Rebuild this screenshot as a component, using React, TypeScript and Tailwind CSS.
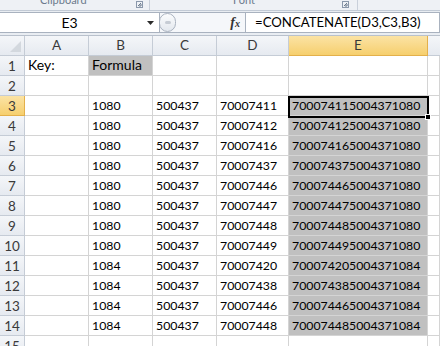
import React from "react";

// Rows 3..14 of the sheet: [B, C, D, E]
const data: [string, string, string, string][] = [
  ["1080", "500437", "70007411", "700074115004371080"],
  ["1080", "500437", "70007412", "700074125004371080"],
  ["1080", "500437", "70007416", "700074165004371080"],
  ["1080", "500437", "70007437", "700074375004371080"],
  ["1080", "500437", "70007446", "700074465004371080"],
  ["1080", "500437", "70007447", "700074475004371080"],
  ["1080", "500437", "70007448", "700074485004371080"],
  ["1080", "500437", "70007449", "700074495004371080"],
  ["1084", "500437", "70007420", "700074205004371084"],
  ["1084", "500437", "70007438", "700074385004371084"],
  ["1084", "500437", "70007446", "700074465004371084"],
  ["1084", "500437", "70007448", "700074485004371084"],
];

const cols = ["A", "B", "C", "D", "E"];

function Launcher() {
  return (
    <svg width="7" height="7" viewBox="0 0 7 7" className="mb-[2px]">
      <rect x="0.5" y="0.5" width="6" height="6" fill="none" stroke="#8a98ab" />
      <path d="M2 5 L5 2 M3 5 H5 V3" stroke="#6b7a8c" fill="none" />
    </svg>
  );
}

function RowHeader({ n, active }: { n: number | string; active?: boolean }) {
  return (
    <div
      className={
        "flex h-[20px] items-end justify-center border-b border-r pb-[2px] text-[13.5px] leading-none " +
        (active
          ? "border-[#e3b04b] bg-gradient-to-b from-[#fbe3a4] to-[#f6cf6d] text-[#3a3a3a]"
          : "border-[#c5ccd6] bg-gradient-to-b from-[#f4f6f9] to-[#e6eaf0] text-[#3a3a3a]")
      }
    >
      {n}
    </div>
  );
}

function Cell({
  children,
  fill,
  word,
}: {
  children?: React.ReactNode;
  fill?: boolean;
  word?: boolean;
}) {
  return (
    <div
      className={
        "flex h-[20px] items-end overflow-hidden whitespace-nowrap border-b border-r border-[#d4d4d4] pb-[3px] pl-[3px] leading-none text-black " +
        (word ? "text-[14px] " : "text-[12.3px] ") +
        (fill ? "bg-[#c0c0c0]" : "bg-white")
      }
    >
      {children}
    </div>
  );
}

export default function App() {
  return (
    <div className="h-[346px] w-[440px] overflow-hidden bg-[#e9edf2] font-['Lato','Liberation_Sans',sans-serif] text-[12px]">
      {/* ribbon group labels, cut off at the top */}
      <div className="flex h-[11px] overflow-hidden border-b border-[#c2cad5] bg-[#eef1f5] text-[11px] leading-none text-[#6b7a8c]">
        <div className="flex w-[150px] items-end justify-between border-r border-[#c9d0da] pr-[6px]">
          <span className="-mt-[6px] ml-[40px] self-start">Clipboard</span>
          <Launcher />
        </div>
        <div className="flex w-[208px] items-end justify-between border-r border-[#c9d0da] pr-[8px]">
          <span className="-mt-[6px] ml-[83px] self-start">Font</span>
          <Launcher />
        </div>
        <div className="flex-1" />
      </div>

      {/* name box + formula bar */}
      <div className="mt-[1px] flex h-[21px] items-stretch">
        <div className="relative flex w-[160px] items-center justify-center border-y border-r border-[#a9b2bf] bg-white text-[14px] text-black">
          <span className="-ml-[20px]">E3</span>
          <svg width="7" height="4" viewBox="0 0 7 4" className="absolute left-[147px] top-[8px]">
            <path d="M0 0 H7 L3.5 4 Z" fill="#2b2b2b" />
          </svg>
        </div>
        <div className="flex w-[85px] items-center border-y border-[#a9b2bf] bg-[#f5f7fa]">
          <div className="-ml-[1px] flex h-[19px] w-[17px] items-center justify-center rounded-full border border-[#a9b2bf] bg-gradient-to-b from-[#fbfcfd] to-[#e3e8ee]">
            <div className="h-[3px] w-[6px] rounded-sm bg-[#c6ccd4]" />
          </div>
          <div className="ml-auto mr-[5px] font-['Liberation_Serif',serif] text-[14px] font-bold italic text-[#333]">
            f<span className="text-[10px]">x</span>
          </div>
        </div>
        <div className="flex flex-1 items-center border border-[#a9b2bf] bg-white pl-[9px] text-[13.2px] text-black">
          =CONCATENATE(D3,C3,B3)
        </div>
      </div>

      {/* sheet grid */}
      <div className="relative mt-[2px] grid grid-cols-[25px_64px_64px_64px_72px_139px_1fr] border-t border-[#b9c1cc] bg-white">
        {/* column headers */}
        <div className="relative h-[20px] border-b border-r border-[#c5ccd6] bg-gradient-to-b from-[#f4f6f9] to-[#e6eaf0]">
          <svg width="11" height="11" viewBox="0 0 11 11" className="absolute bottom-[3px] right-[3px]">
            <path d="M11 0 V11 H0 Z" fill="#d3d8de" />
          </svg>
        </div>
        {cols.map((c) => (
          <div
            key={c}
            className={
              "flex h-[20px] items-end justify-center border-b border-r pb-[3px] text-[13.5px] leading-none " +
              (c === "E"
                ? "border-[#e3b04b] bg-gradient-to-b from-[#fbe3a4] to-[#f6cf6d] text-[#3a3a3a]"
                : "border-[#c5ccd6] bg-gradient-to-b from-[#f4f6f9] to-[#e6eaf0] text-[#3a3a3a]")
            }
          >
            {c}
          </div>
        ))}
        <div className="h-[20px] border-b border-[#c5ccd6] bg-gradient-to-b from-[#f4f6f9] to-[#e6eaf0]" />

        {/* row 1 */}
        <RowHeader n={1} />
        <Cell word>Key:</Cell>
        <Cell fill word>Formula</Cell>
        <Cell />
        <Cell />
        <Cell />
        <Cell />

        {/* row 2 */}
        <RowHeader n={2} />
        <Cell />
        <Cell />
        <Cell />
        <Cell />
        <Cell />
        <Cell />

        {data.map((r, i) => (
          <React.Fragment key={i}>
            <RowHeader n={i + 3} active={i === 0} />
            <Cell />
            <Cell>{r[0]}</Cell>
            <Cell>{r[1]}</Cell>
            <Cell>{r[2]}</Cell>
            <Cell fill>{r[3]}</Cell>
            <Cell />
          </React.Fragment>
        ))}

        {/* row 15, cut off */}
        <RowHeader n={15} />
        <Cell />
        <Cell />
        <Cell />
        <Cell />
        <Cell />
        <Cell />

        {/* active cell E3 outline and fill handle */}
        <div className="pointer-events-none absolute left-[288px] top-[60px] h-[22px] w-[141px] border-2 border-black" />
        <div className="pointer-events-none absolute left-[425px] top-[78px] h-[6px] w-[6px] border border-white bg-black" />
      </div>
    </div>
  );
}
